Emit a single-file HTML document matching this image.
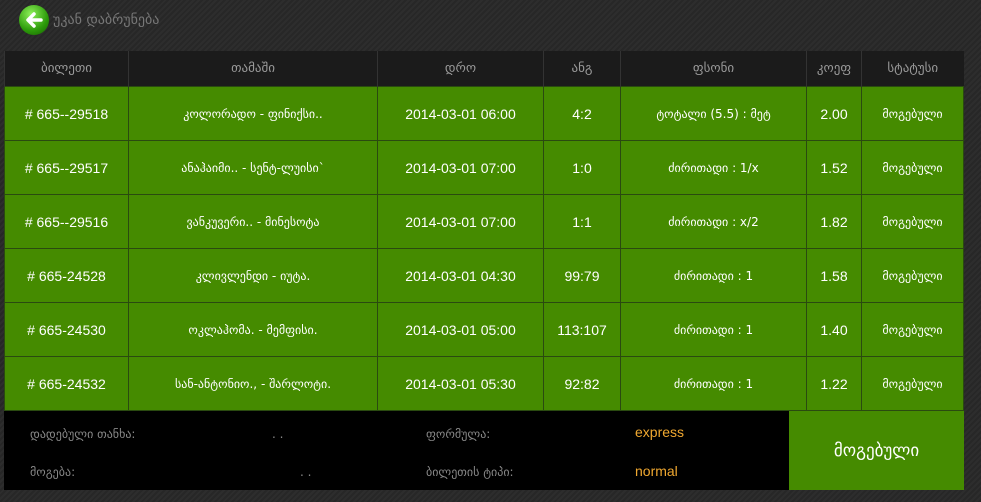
<!DOCTYPE html>
<html><head><meta charset="utf-8"><style>
body{margin:0;width:981px;height:502px;overflow:hidden;background:#2a2a2a;background-image:repeating-linear-gradient(135deg,#2d2d2d 0 2px,#272727 2px 4px);font-family:"Liberation Sans","DejaVu Sans",sans-serif;position:relative}
.back{position:absolute;left:19px;top:5px;display:flex;align-items:center}
.ic{width:30px;height:30px;border-radius:50%;background:radial-gradient(circle at 40% 30%,#8ef05a,#2c9a0a 60%,#145f00);display:flex;align-items:center;justify-content:center}
.back span{color:#777;font-size:14px;margin-left:4px;font-family:"DejaVu Sans",sans-serif}
table{position:absolute;left:4px;top:51px;border-collapse:collapse;width:959px;table-layout:fixed}
th{background:#1b1b1b;color:#9a9a9a;font-weight:normal;font-size:13px;height:35px;padding:0;border-left:1px solid #333;font-family:"DejaVu Sans",sans-serif}
td{background:#458b00;color:#fff;font-size:14px;text-align:center;height:53px;border:1px solid #2a4a10;padding:0}
td.g{font-family:"DejaVu Sans",sans-serif;font-size:12px}
.bot{position:absolute;left:4px;top:411px;width:785px;height:79px;background:#000;color:#888;font-size:12px;font-family:"DejaVu Sans",sans-serif}
.bot div{position:absolute}
.y{color:#f0a830;font-family:"Liberation Sans",sans-serif;font-size:14px}
.btn{position:absolute;left:789px;top:411px;width:175px;height:79px;background:#458b00;color:#fff;font-size:17px;display:flex;align-items:center;justify-content:center;font-family:"DejaVu Sans",sans-serif}
</style></head><body>
<div class="back"><div class="ic"><svg width="20" height="20" viewBox="0 0 20 20"><path d="M17 10H5M10 4L4 10l6 6" stroke="#fff" stroke-width="3.5" fill="none" stroke-linecap="round" stroke-linejoin="round"/></svg></div><span>უკან დაბრუნება</span></div>
<table>
<colgroup><col style="width:124px"><col style="width:249px"><col style="width:166px"><col style="width:77px"><col style="width:186px"><col style="width:55px"><col style="width:102px"></colgroup>
<tr><th>ბილეთი</th><th>თამაში</th><th>დრო</th><th>ანგ</th><th>ფსონი</th><th>კოეფ</th><th>სტატუსი</th></tr>
<tr><td># 665--29518</td><td class="g">კოლორადო - ფინიქსი..</td><td>2014-03-01 06:00</td><td>4:2</td><td class="g">ტოტალი (5.5) : მეტ</td><td>2.00</td><td class="g">მოგებული</td></tr>
<tr><td># 665--29517</td><td class="g">ანაჰაიმი.. - სენტ-ლუისი`</td><td>2014-03-01 07:00</td><td>1:0</td><td class="g">ძირითადი : 1/x</td><td>1.52</td><td class="g">მოგებული</td></tr>
<tr><td># 665--29516</td><td class="g">ვანკუვერი.. - მინესოტა</td><td>2014-03-01 07:00</td><td>1:1</td><td class="g">ძირითადი : x/2</td><td>1.82</td><td class="g">მოგებული</td></tr>
<tr><td># 665-24528</td><td class="g">კლივლენდი - იუტა.</td><td>2014-03-01 04:30</td><td>99:79</td><td class="g">ძირითადი : 1</td><td>1.58</td><td class="g">მოგებული</td></tr>
<tr><td># 665-24530</td><td class="g">ოკლაჰომა. - მემფისი.</td><td>2014-03-01 05:00</td><td>113:107</td><td class="g">ძირითადი : 1</td><td>1.40</td><td class="g">მოგებული</td></tr>
<tr><td># 665-24532</td><td class="g">სან-ანტონიო., - შარლოტი.</td><td>2014-03-01 05:30</td><td>92:82</td><td class="g">ძირითადი : 1</td><td>1.22</td><td class="g">მოგებული</td></tr>
</table>
<div class="bot">
<div style="left:26px;top:16px">დადებული თანხა:</div>
<div style="left:268px;top:16px">. .</div>
<div style="left:422px;top:16px">ფორმულა:</div>
<div class="y" style="left:631px;top:13px">express</div>
<div style="left:26px;top:54px">მოგება:</div>
<div style="left:296px;top:54px">. .</div>
<div style="left:422px;top:54px">ბილეთის ტიპი:</div>
<div class="y" style="left:631px;top:52px">normal</div>
</div>
<div class="btn">მოგებული</div>
</body></html>
